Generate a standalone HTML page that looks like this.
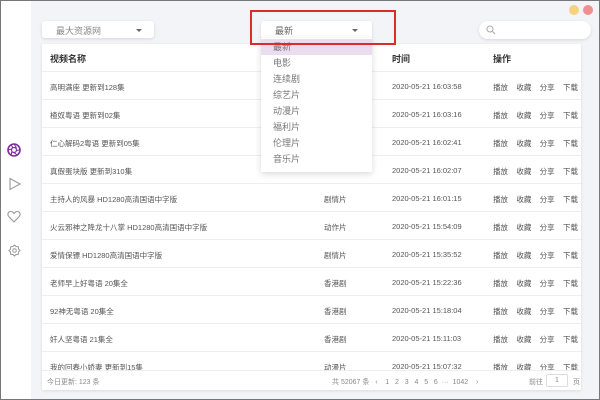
<!DOCTYPE html><html><head><meta charset="utf-8"><style>
*{margin:0;padding:0;box-sizing:border-box}
body{width:600px;height:400px;overflow:hidden;font-family:"Liberation Sans","Noto Sans CJK SC",sans-serif;background:#f3f4f8;position:relative;color:#444}
.frame{position:absolute;left:0;top:0;width:600px;height:400px;border:1px solid #777;pointer-events:none;z-index:10}
.side{position:absolute;left:0;top:0;width:31px;height:400px;background:#fff}
.sel{position:absolute;background:#fff;border-radius:3px;box-shadow:0 1px 3px rgba(0,0,0,.12);font-size:9px;color:#888}
.arr{position:absolute;width:0;height:0;border-left:3px solid transparent;border-right:3px solid transparent;border-top:3px solid #666}
.card{position:absolute;left:42px;top:44px;width:539px;height:346px;background:#fff;box-shadow:0 1px 3px rgba(0,0,0,.1);overflow:hidden}
.row{position:absolute;left:0;width:539px;height:28px;border-bottom:1px solid #eceef2;font-size:7.5px;color:#555}
.row span{position:absolute;top:10px;white-space:nowrap}
.hd span{font-size:9px;font-weight:bold;color:#333;top:8px}
.menu{position:absolute;left:261px;top:38px;width:111px;height:134px;background:#fff;box-shadow:0 2px 6px rgba(0,0,0,.15);z-index:5;font-size:9px;color:#777}
.menu div{height:16px;line-height:16px;padding-left:12px}
.foot{position:absolute;left:0;top:326px;width:539px;height:20px;border-top:1px solid #eceef2;font-size:7px;color:#888;background:#fff}
.foot span{position:absolute;top:6px;white-space:nowrap}
</style></head><body>
<div class="side">
<svg style="position:absolute;left:6px;top:142px" width="16" height="16" viewBox="0 0 16 16"><circle cx="8" cy="8" r="6" fill="none" stroke="#7b2f9b" stroke-width="1.6"/><circle cx="8" cy="8" r="2.5" fill="none" stroke="#7b2f9b" stroke-width="1.2"/><path d="M8 2L10.5 5.8M14 8L10 8.5M11 13L8 10.5M5 13.2L6 9.5M2 8L5.7 7M5 2.8L7 6" stroke="#7b2f9b" stroke-width="1.1"/></svg>
<svg style="position:absolute;left:8px;top:177px" width="14" height="14" viewBox="0 0 14 14"><path d="M2 1.5L12 7L2 12.5Z" fill="none" stroke="#999" stroke-width="1.1"/></svg>
<svg style="position:absolute;left:7px;top:210px" width="14" height="13" viewBox="0 0 14 13"><path d="M7 12L1.8 6.5C0 4.6 1 1.5 3.8 1.5C5.3 1.5 6.3 2.5 7 3.5C7.7 2.5 8.7 1.5 10.2 1.5C13 1.5 14 4.6 12.2 6.5Z" fill="none" stroke="#999" stroke-width="1.1"/></svg>
<svg style="position:absolute;left:8px;top:244px" width="13" height="13" viewBox="0 0 13 13"><path d="M6.5 1L8 2.5L10.3 2.7L10.5 5L12 6.5L10.5 8L10.3 10.3L8 10.5L6.5 12L5 10.5L2.7 10.3L2.5 8L1 6.5L2.5 5L2.7 2.7L5 2.5Z" fill="none" stroke="#999" stroke-width="1"/><circle cx="6.5" cy="6.5" r="1.8" fill="none" stroke="#999"/></svg>
</div>
<div style="position:absolute;left:569px;top:5px;width:10px;height:10px;border-radius:50%;background:#f6d27e"></div>
<div style="position:absolute;left:583px;top:5px;width:10px;height:10px;border-radius:50%;background:#f08f8f"></div>
<div class="sel" style="left:42px;top:21px;width:112px;height:17px"><span style="position:absolute;left:14px;top:3px">最大资源网</span><div class="arr" style="left:94px;top:8px"></div></div>
<div class="sel" style="left:261px;top:21px;width:111px;height:18px"><span style="position:absolute;left:14px;top:3px;color:#666">最新</span><div class="arr" style="left:91px;top:8px"></div></div>
<div class="sel" style="left:479px;top:21px;width:112px;height:18px;border-radius:9px"><svg style="position:absolute;left:7px;top:4px" width="10" height="10" viewBox="0 0 10 10"><circle cx="4" cy="4" r="3" fill="none" stroke="#aaa"/><path d="M6.3 6.3L9 9" stroke="#aaa"/></svg></div>
<div style="position:absolute;left:250px;top:10px;width:146px;height:35px;border:2px solid #e02a2a;z-index:6"></div>
<div class="menu"><div style="background:#ebdcf0;margin-top:1px">最新</div><div>电影</div><div>连续剧</div><div>综艺片</div><div>动漫片</div><div>福利片</div><div>伦理片</div><div>音乐片</div></div>
<div class="card">
<div class="row hd" style="top:0"><span style="left:8px">视频名称</span><span style="left:350px">时间</span><span style="left:451px">操作</span></div>
<div class="row" style="top:28px"><span style="left:8px">高明满座 更新到128集</span><span style="left:350px">2020-05-21 16:03:58</span><span style="left:451px">播放&nbsp;&nbsp;&nbsp; 收藏&nbsp;&nbsp;&nbsp; 分享&nbsp;&nbsp;&nbsp; 下载</span></div>
<div class="row" style="top:56px"><span style="left:8px">楂奴粤语 更新到02集</span><span style="left:350px">2020-05-21 16:03:16</span><span style="left:451px">播放&nbsp;&nbsp;&nbsp; 收藏&nbsp;&nbsp;&nbsp; 分享&nbsp;&nbsp;&nbsp; 下载</span></div>
<div class="row" style="top:84px"><span style="left:8px">仁心解码2粤语 更新到05集</span><span style="left:350px">2020-05-21 16:02:41</span><span style="left:451px">播放&nbsp;&nbsp;&nbsp; 收藏&nbsp;&nbsp;&nbsp; 分享&nbsp;&nbsp;&nbsp; 下载</span></div>
<div class="row" style="top:112px"><span style="left:8px">真假蛋块版 更新到310集</span><span style="left:350px">2020-05-21 16:02:07</span><span style="left:451px">播放&nbsp;&nbsp;&nbsp; 收藏&nbsp;&nbsp;&nbsp; 分享&nbsp;&nbsp;&nbsp; 下载</span></div>
<div class="row" style="top:140px"><span style="left:8px">主持人的风暴 HD1280高清国语中字版</span><span style="left:282px">剧情片</span><span style="left:350px">2020-05-21 16:01:15</span><span style="left:451px">播放&nbsp;&nbsp;&nbsp; 收藏&nbsp;&nbsp;&nbsp; 分享&nbsp;&nbsp;&nbsp; 下载</span></div>
<div class="row" style="top:168px"><span style="left:8px">火云邪神之降龙十八掌 HD1280高清国语中字版</span><span style="left:282px">动作片</span><span style="left:350px">2020-05-21 15:54:09</span><span style="left:451px">播放&nbsp;&nbsp;&nbsp; 收藏&nbsp;&nbsp;&nbsp; 分享&nbsp;&nbsp;&nbsp; 下载</span></div>
<div class="row" style="top:196px"><span style="left:8px">爱情保镖 HD1280高清国语中字版</span><span style="left:282px">剧情片</span><span style="left:350px">2020-05-21 15:35:52</span><span style="left:451px">播放&nbsp;&nbsp;&nbsp; 收藏&nbsp;&nbsp;&nbsp; 分享&nbsp;&nbsp;&nbsp; 下载</span></div>
<div class="row" style="top:224px"><span style="left:8px">老师早上好粤语 20集全</span><span style="left:282px">香港剧</span><span style="left:350px">2020-05-21 15:22:36</span><span style="left:451px">播放&nbsp;&nbsp;&nbsp; 收藏&nbsp;&nbsp;&nbsp; 分享&nbsp;&nbsp;&nbsp; 下载</span></div>
<div class="row" style="top:252px"><span style="left:8px">92神无粤语 20集全</span><span style="left:282px">香港剧</span><span style="left:350px">2020-05-21 15:18:04</span><span style="left:451px">播放&nbsp;&nbsp;&nbsp; 收藏&nbsp;&nbsp;&nbsp; 分享&nbsp;&nbsp;&nbsp; 下载</span></div>
<div class="row" style="top:280px"><span style="left:8px">奸人坚粤语 21集全</span><span style="left:282px">香港剧</span><span style="left:350px">2020-05-21 15:11:03</span><span style="left:451px">播放&nbsp;&nbsp;&nbsp; 收藏&nbsp;&nbsp;&nbsp; 分享&nbsp;&nbsp;&nbsp; 下载</span></div>
<div class="row" style="top:308px"><span style="left:8px">我的回春小娇妻 更新到15集</span><span style="left:282px">动漫片</span><span style="left:350px">2020-05-21 15:07:32</span><span style="left:451px">播放&nbsp;&nbsp;&nbsp; 收藏&nbsp;&nbsp;&nbsp; 分享&nbsp;&nbsp;&nbsp; 下载</span></div>
<div class="foot"><span style="left:5px">今日更新: 123 条</span><span style="left:290px">共 52067 条&nbsp;&nbsp; ‹&nbsp;&nbsp;&nbsp; 1&nbsp;&nbsp; 2&nbsp;&nbsp; 3&nbsp;&nbsp; 4&nbsp;&nbsp; 5&nbsp;&nbsp; 6&nbsp; ···&nbsp; 1042&nbsp;&nbsp;&nbsp; ›</span><span style="left:487px">前往</span><div style="position:absolute;left:504px;top:3px;width:22px;height:13px;border:1px solid #ddd;border-radius:2px;text-align:center;line-height:11px">1</div><span style="left:531px">页</span></div>
</div>
<div class="frame"></div>
</body></html>
